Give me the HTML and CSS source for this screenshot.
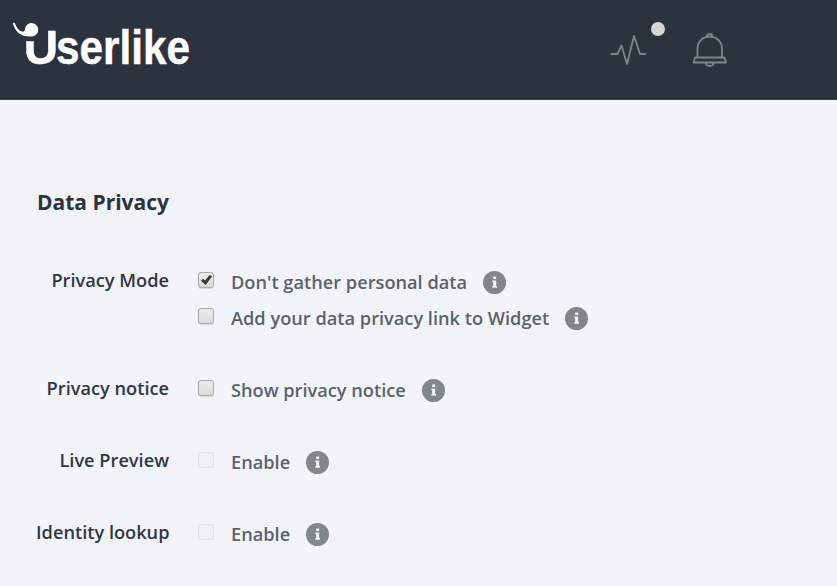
FILE: index.html
```
<!DOCTYPE html>
<html lang="en">
<head>
    <meta charset="UTF-8">
    <meta name="viewport" content="width=device-width, initial-scale=1.0">
    <title>Userlike - Data Privacy</title>
    <link rel="stylesheet" href="styles.css">
</head>
<body>
<header class="topbar">
    <svg class="logo" width="210" height="90" viewBox="0 0 210 90" role="img" aria-label="Userlike">
        <text class="logo-text" y="64"><tspan x="23.8" textLength="34.400" lengthAdjust="spacingAndGlyphs">U</tspan><tspan x="56" textLength="134" lengthAdjust="spacingAndGlyphs">serlike</tspan></text>
        <path class="logo-gap" d="M22 26H38V40C34 41.500 30 41.700 22 40.500z"/>
        <path class="logo-mark" d="M13 24C15.500 32 21 37 31 36.500A6.700 6.700 0 1 0 25 28.500C25 31 24 32 22 31.500C18.500 30.500 16.500 27.500 15 23.500C14 22.300 12.600 22.800 13 24z"/>
    </svg>
    <nav class="tools">
        <svg class="pulse" width="38" height="34" viewBox="0 0 38 34">
            <path d="M1.500 21H7.500L11.500 12.500L17 31L24 3L30 21H35.500"/>
        </svg>
        <span class="dot"></span>
        <svg class="bell" width="36" height="36" viewBox="0 0 36 36">
            <path d="M5.500 25V17C5.500 9.500 11 4.500 17.700 4.500S30 9.500 30 17V25M3 25.500H32.500L34 30.500H1.500zM14.800 4.600A2.900 2.700 0 0 1 20.600 4.600M13.800 31C14.300 35 21.200 35 21.700 31"/>
        </svg>
    </nav>
</header>

<main class="settings">
    <h1>Data Privacy</h1>
    <form>
        <div class="row">
            <div class="label">Privacy Mode</div>
            <div class="options">
                <label class="option"><input type="checkbox" checked><span>Don't gather personal data</span>
                    <svg class="info" viewBox="0 0 22 22"><circle cx="11" cy="11" r="11"/><path d="M9.700 5.300h2.900v2.300h-2.900zM9 9h3.600v5.300h.8v1.700H8.900v-1.700h.8v-3.600h-.7z"/></svg>
                </label>
                <label class="option"><input type="checkbox"><span>Add your data privacy link to Widget</span>
                    <svg class="info" viewBox="0 0 22 22"><circle cx="11" cy="11" r="11"/><path d="M9.700 5.300h2.900v2.300h-2.900zM9 9h3.600v5.300h.8v1.700H8.900v-1.700h.8v-3.600h-.7z"/></svg>
                </label>
            </div>
        </div>
        <div class="row">
            <div class="label">Privacy notice</div>
            <div class="options">
                <label class="option"><input type="checkbox"><span>Show privacy notice</span>
                    <svg class="info" viewBox="0 0 22 22"><circle cx="11" cy="11" r="11"/><path d="M9.700 5.300h2.900v2.300h-2.900zM9 9h3.600v5.300h.8v1.700H8.900v-1.700h.8v-3.600h-.7z"/></svg>
                </label>
            </div>
        </div>
        <div class="row">
            <div class="label">Live Preview</div>
            <div class="options">
                <label class="option"><input type="checkbox" disabled><span>Enable</span>
                    <svg class="info" viewBox="0 0 22 22"><circle cx="11" cy="11" r="11"/><path d="M9.700 5.300h2.900v2.300h-2.900zM9 9h3.600v5.300h.8v1.700H8.900v-1.700h.8v-3.600h-.7z"/></svg>
                </label>
            </div>
        </div>
        <div class="row">
            <div class="label">Identity lookup</div>
            <div class="options">
                <label class="option"><input type="checkbox" disabled><span>Enable</span>
                    <svg class="info" viewBox="0 0 22 22"><circle cx="11" cy="11" r="11"/><path d="M9.700 5.300h2.900v2.300h-2.900zM9 9h3.600v5.300h.8v1.700H8.900v-1.700h.8v-3.600h-.7z"/></svg>
                </label>
            </div>
        </div>
    </form>
</main>
</body>
</html>
```

FILE: styles.css
```
body {
    margin: 0;
    background-color: #f2f4fa;
    font-family: "Open Sans", "Noto Sans", sans-serif;
    font-size: 18.22px;
    font-weight: 600;
}

.topbar {
    box-sizing: border-box;
    height: 100px;
    display: flex;
    align-items: flex-start;
    justify-content: space-between;
    padding-right: 109px;
    background-color: #2c323e;
    border-bottom: 1px solid #3b414c;
}

.logo-text {
    font-family: "Liberation Sans", Arial, sans-serif;
    font-size: 49px;
    font-weight: bold;
    fill: #fff;
    stroke: #fff;
    stroke-width: 0.5;
}

.logo-gap {
    fill: #2c323e;
}

.logo-mark {
    fill: #fff;
}

.tools {
    display: flex;
    align-items: flex-start;
    padding-top: 22px;
}

.tools svg {
    fill: none;
    stroke: #80858d;
    stroke-width: 1.8;
    stroke-linejoin: round;
    stroke-linecap: round;
}

.pulse {
    margin-top: 11px;
}

.dot {
    width: 14px;
    height: 14px;
    margin: 0 27px 0 3px;
    border-radius: 50%;
    background-color: #d6d6d6;
}

.bell {
    margin-top: 10px;
}

.settings {
    padding: 87px 0 0 37px;
}

h1 {
    margin: 0 0 47px;
    font-size: 21px;
    line-height: 30px;
    font-weight: 700;
    color: #2c343f;
}

.row {
    display: grid;
    grid-template-columns: 133px 1fr;
    column-gap: 29px;
    margin-left: -1px;
    margin-bottom: 36px;
}

.row:last-child {
    margin-bottom: 0;
}

.label {
    line-height: 32px;
    text-align: right;
    white-space: nowrap;
    color: #303843;
}

.option {
    display: flex;
    align-items: center;
    height: 36px;
    color: #5b626b;
}

.option input {
    appearance: none;
    box-sizing: border-box;
    width: 16px;
    height: 16px;
    margin: 0 17px 4px 0;
    border: 1px solid #a9abae;
    border-radius: 3px;
    background: linear-gradient(#ececec, #dcdcdc);
    box-shadow: 0 1px 1px rgba(0, 0, 0, 0.12);
}

.option input:checked::after {
    content: "";
    display: block;
    width: 11px;
    height: 10px;
    margin: 2px;
    background-color: #34373b;
    clip-path: polygon(0 58%, 20% 38%, 38% 55%, 78% 0, 100% 16%, 42% 100%);
}

.option input:disabled {
    border-color: #dfe1e5;
    background: #eff0f4;
    box-shadow: none;
}

.info {
    width: 23px;
    height: 23px;
    margin-left: 16px;
}

.info circle {
    fill: #81858c;
}

.info path {
    fill: #f2f4fa;
}
```
